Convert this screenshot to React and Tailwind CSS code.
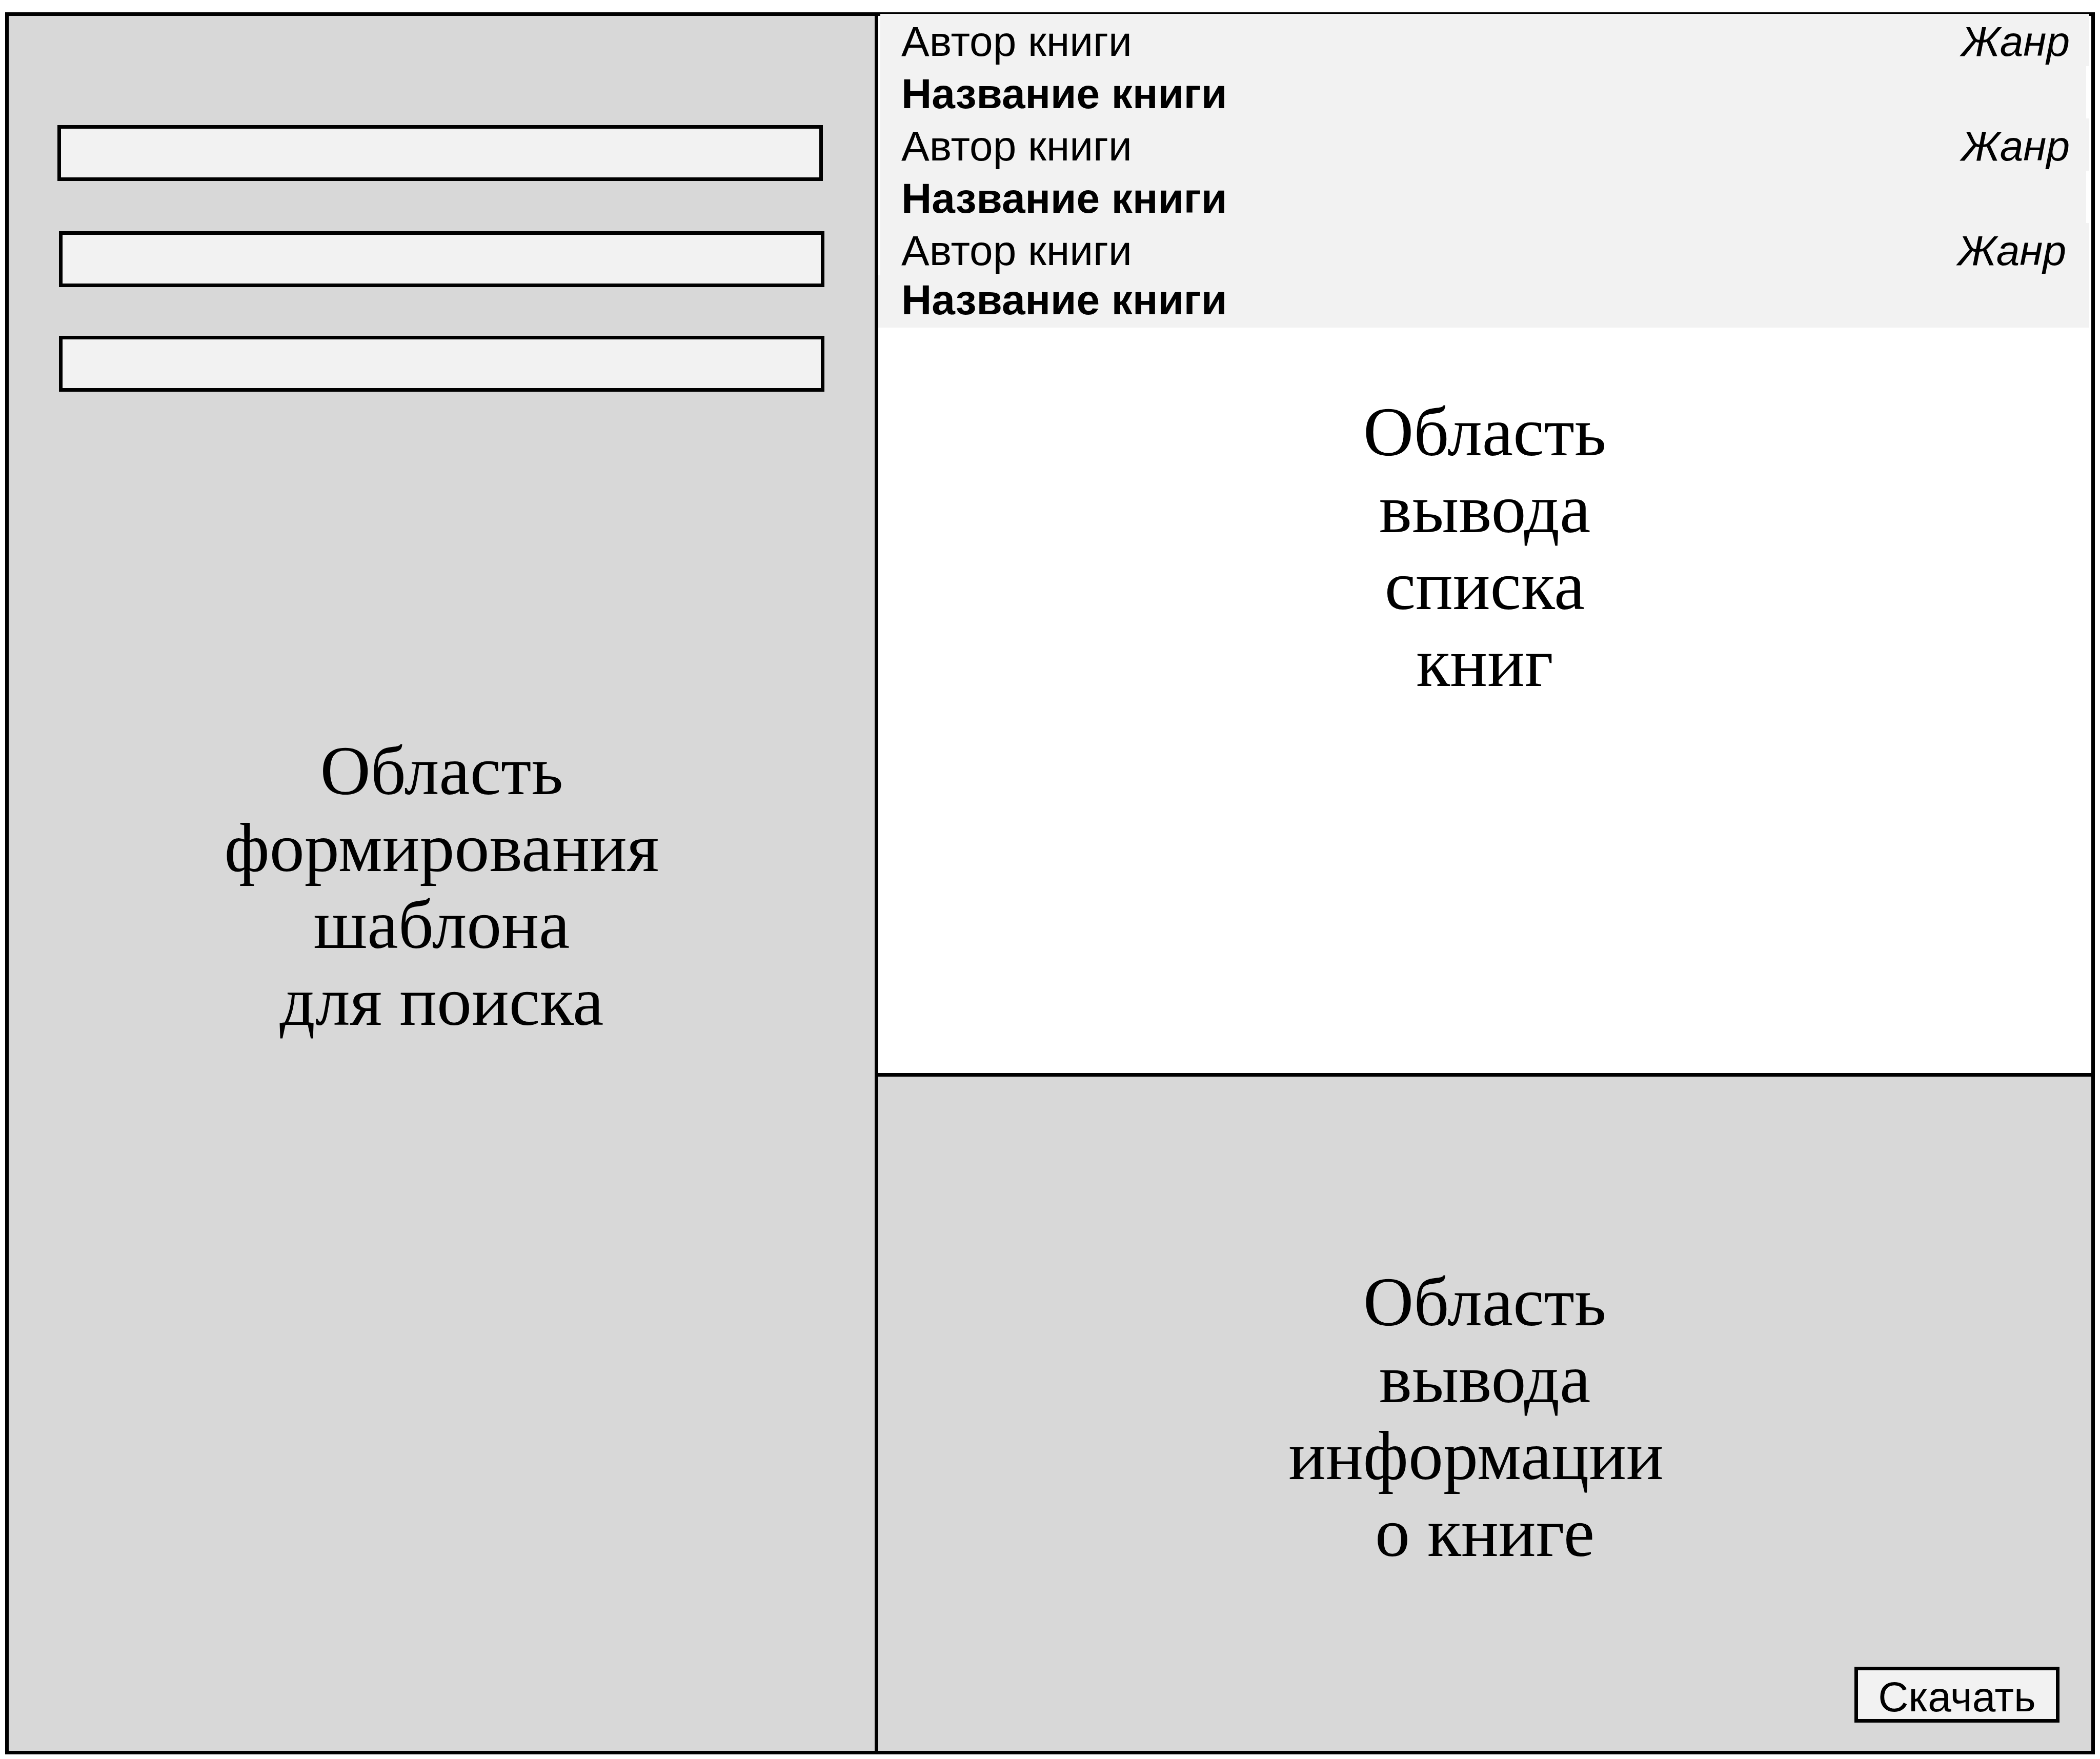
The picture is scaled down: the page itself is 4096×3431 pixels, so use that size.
// Each band of the list has its own inset from the panel's edges.
const books = [
  { id: 1, head: "pr-[38px]", title: "ml-1 mr-[10px] pl-[41px] pt-[6px] leading-[96px]" },
  { id: 2, head: "pr-[38px]", title: "ml-1 mr-[10px] pl-[41px] pt-[6px] leading-[96px]" },
  { id: 3, head: "pr-[45px]", title: "mr-1 pl-[45px] leading-[96px] pb-[6px]" },
];

const fields = [
  { name: "Автор", spacing: "mr-[3px] -ml-[3px] mb-[98px]" },
  { name: "Название", spacing: "mb-[95px]" },
  { name: "Жанр", spacing: "" },
];

function Caption({ lines, className = "" }) {
  return (
    <h2 className={`text-center font-['Liberation_Serif',serif] text-[136px] leading-[150px] ${className}`}>
      {lines.map((line) => (
        <span key={line} className="block">{line}</span>
      ))}
    </h2>
  );
}

export default function App() {
  return (
    <div className="min-h-screen flex flex-col bg-white text-black pt-6 pl-[10px] pr-[10px] pb-[9px]">
      <main className="grow grid grid-cols-[1696fr_2366fr] border-[7px] border-black bg-[#d8d8d8] font-['Liberation_Sans',sans-serif]">
        <form className="border-r-[7px] border-black pt-[213px] px-[98px]">
          <div className="flex flex-col">
            {fields.map(({ name, spacing }) => (
              <div key={name} className={spacing}>
                <input aria-label={name} className="block w-full h-[109px] border-[7px] border-black bg-[#f2f2f2] px-6 text-[82px]" />
              </div>
            ))}
          </div>
          <Caption className="mt-[664px]" lines={["Область", "формирования", "шаблона", "для поиска"]} />
        </form>
        <div className="grid grid-rows-[2069px_1fr]">
          <section className="border-b-[7px] border-black bg-white">
            <ul className="-mt-1 text-[82px]">
              {books.map(({ id, head, title }) => (
                <li key={id}>
                  <div className={`mx-1 pl-[41px] pt-[6px] flex justify-between bg-[#f2f2f2] leading-[96px] ${head}`}>
                    <span>Автор книги</span>
                    <em>Жанр</em>
                  </div>
                  <strong className={`block bg-[#f2f2f2] ${title}`}>Название книги</strong>
                </li>
              ))}
            </ul>
            <Caption className="mt-32" lines={["Область", "вывода", "списка", "книг"]} />
          </section>
          <section className="flex flex-col pt-[364px] pb-[55px]">
            <Caption lines={["Область", "вывода", "информации\u00a0", "о книге"]} />
            <button type="button" className="mt-auto mr-[62px] self-end w-[400px] h-[109px] border-[7px] border-black bg-[#f2f2f2] pt-2 text-[82px] leading-none">Скачать</button>
          </section>
        </div>
      </main>
    </div>
  );
}
